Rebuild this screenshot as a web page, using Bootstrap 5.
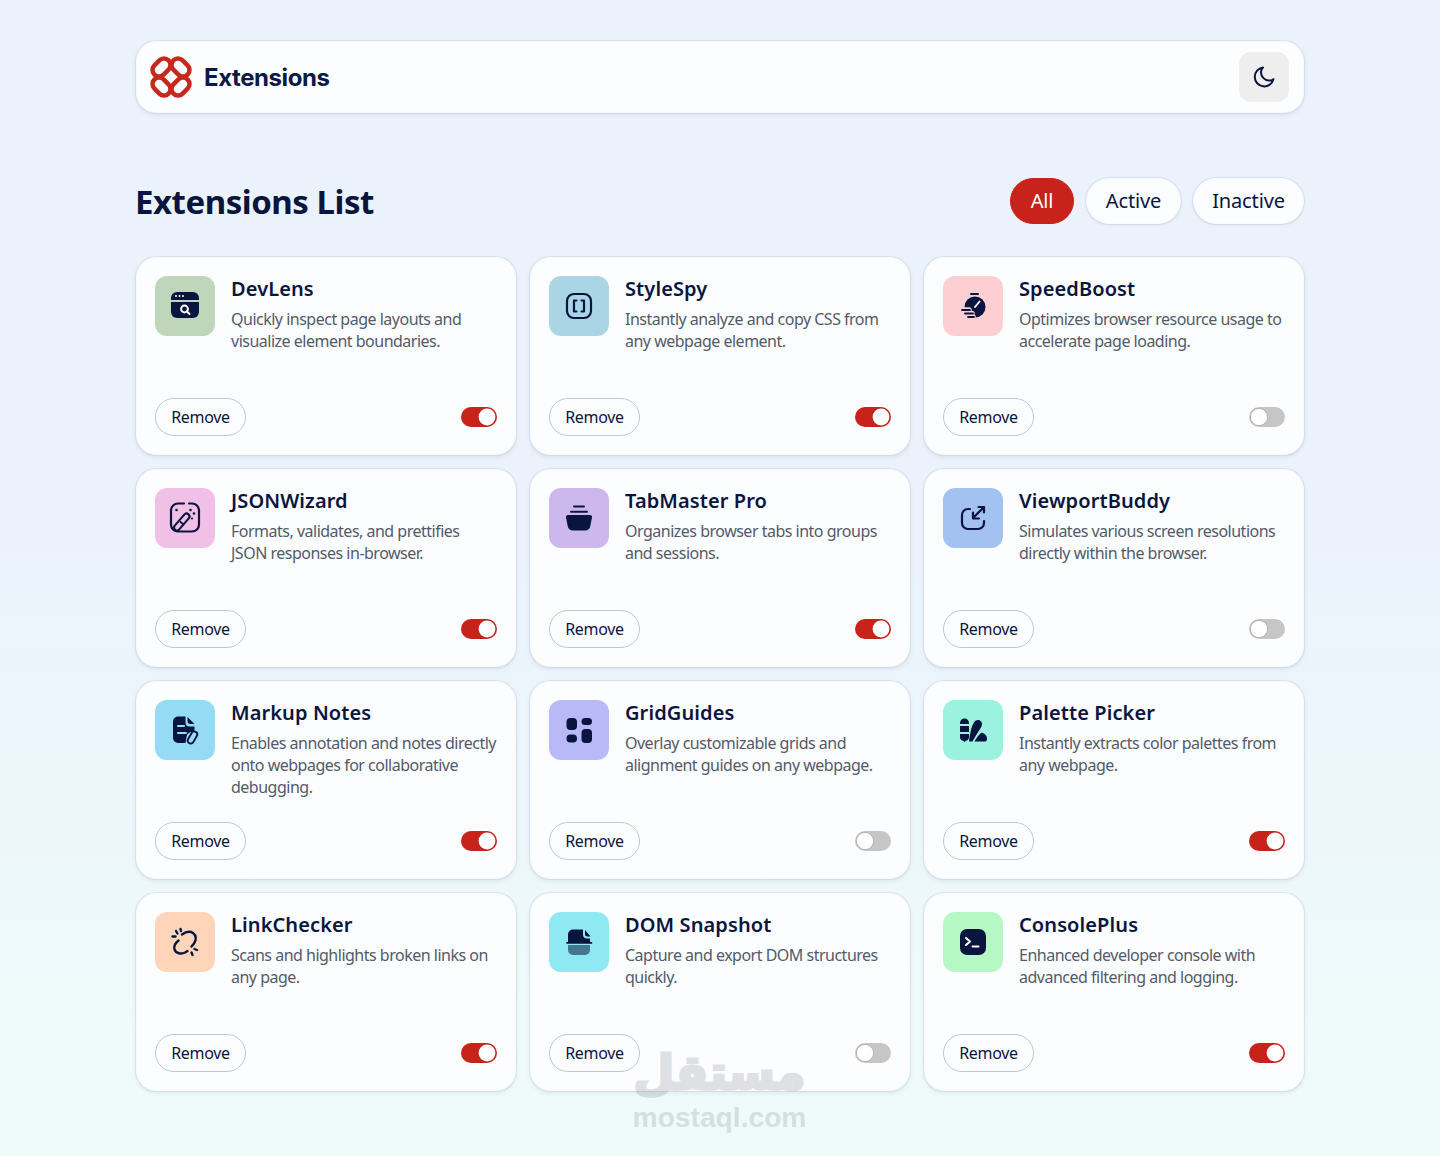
<!DOCTYPE html>
<html lang="en">
<head>
<meta charset="utf-8">
<title>Extensions</title>
<link href="https://cdn.jsdelivr.net/npm/bootstrap@5.3.0/dist/css/bootstrap.min.css" rel="stylesheet">
<style>
html,body{height:1156px;overflow:hidden}
body{font-family:"Noto Sans","Liberation Sans",sans-serif;color:#09153e;background:linear-gradient(180deg,#ebf2fc 0%,#ebf2fc 45%,#eefafa 88%,#eefbf9 100%);position:relative}
.shell{width:1168px;margin:0 auto;padding-top:41px}
.topbar{height:72px;background:#fcfdff;border:1px solid #f8f9fc;border-radius:20px;box-shadow:0 0 0 1px rgba(190,200,218,.35),0 2px 4px rgba(50,70,110,.1);padding:0 14px 0 13px}
.brand-name{font-family:Inter,"Noto Sans",sans-serif;font-weight:700;font-size:24px;letter-spacing:-.42px;color:#0b1a45;margin-left:12px;padding-top:2px}
.theme-btn{width:50px;height:50px;background:#eeeeee;border-radius:12px;border:0;padding:0}
.list-head{margin-top:65px;height:46px}
.list-title{font-size:33px;font-weight:700;letter-spacing:-.47px;margin:1px 0 0 -1px;color:#09153e}
.pill-row{column-gap:12px}
.filter-pill{height:46px;padding:0;font-size:20px;letter-spacing:-.15px;background:#fcfdff;border:1px solid #f8f9fc;box-shadow:0 0 0 1px rgba(190,200,218,.35),0 1px 3px rgba(50,70,110,.1);color:#09153e;line-height:44px}
.filter-pill.on{background:#c7231a;border-color:#c7231a;color:#fff;box-shadow:none}
.fp-all{width:64px}
.fp-act{width:95px}
.fp-ina{width:111px}
.tile-grid{display:grid;grid-template-columns:repeat(3,380px);grid-auto-rows:198px;column-gap:14px;row-gap:14px;margin-top:33px}
.ext-card{background:#fcfdff;border:1px solid #f8f9fc;border-radius:20px;box-shadow:0 0 0 1px rgba(190,200,218,.35),0 2px 4px rgba(50,70,110,.1);padding:18px}
.ext-icon{flex:0 0 60px;width:60px;height:60px;border-radius:12px}
.ext-name{font-size:20px;font-weight:600;line-height:27px;margin:-1px 0 6px;color:#09153e;letter-spacing:.1px}
.ext-desc{font-size:16px;line-height:22px;color:#535a68;letter-spacing:-.5px;margin:0 -1px 0 0}
.rm-btn{height:38px;width:91px;padding:0;font-size:16px;letter-spacing:-.3px;border:1px solid #c6c6c8;color:#09153e;background:transparent}
.form-switch .form-check-input.sw{width:36px;height:20px;margin:0;float:none;border:0;background-color:#c6c6c6;box-shadow:none;cursor:pointer;background-position:left center;background-image:url("data:image/svg+xml,%3csvg xmlns='http://www.w3.org/2000/svg' viewBox='-5 -5 10 10'%3e%3ccircle r='4.3' fill='%23fff' stroke='%23999' stroke-width='.3'/%3e%3c/svg%3e")}
.form-switch .form-check-input.sw:checked{background-color:#c7231a;background-position:right center;background-image:url("data:image/svg+xml,%3csvg xmlns='http://www.w3.org/2000/svg' viewBox='-5 -5 10 10'%3e%3ccircle r='4.2' fill='%23fff'/%3e%3c/svg%3e")}
.wm{position:absolute;left:632px;top:1041px;width:175px;text-align:center;color:#6e737d;opacity:.2;pointer-events:none}
.wm-ar{font-family:"DejaVu Sans",sans-serif;font-weight:700;font-size:47px;line-height:64px;height:64px;-webkit-text-stroke:3px #6e737d;white-space:nowrap}
.wm-en{font-family:"Liberation Sans",sans-serif;font-weight:700;font-size:28.200px;line-height:26px;margin-top:-1px;white-space:nowrap}
</style>
</head>
<body>
<div class="shell">
  <header class="topbar d-flex align-items-center justify-content-between">
    <div class="d-flex align-items-center">
      <svg width="42" height="42" viewBox="0 0 42 42" fill="none" stroke="#c7281e" stroke-width="4.500"><rect x="1.500" y="5" width="20" height="13" rx="6.500" transform="rotate(-45 11.500 11.500)"/><rect x="20.500" y="5" width="20" height="13" rx="6.500" transform="rotate(45 30.500 11.500)"/><rect x="1.500" y="24" width="20" height="13" rx="6.500" transform="rotate(45 11.500 30.500)"/><rect x="20.500" y="24" width="20" height="13" rx="6.500" transform="rotate(-45 30.500 30.500)"/></svg>
      <span class="brand-name">Extensions</span>
    </div>
    <button class="theme-btn d-flex align-items-center justify-content-center" aria-label="Toggle theme">
      <svg width="24" height="24" viewBox="0 0 24 24" fill="none" stroke="#09153e" stroke-width="2" stroke-linecap="round" stroke-linejoin="round"><path d="M11 2.500a9.500 9.500 0 1 0 10.500 11.600c-.9 1-2.300 1.500-4.600 1.500A8.500 8.500 0 0 1 9 7c0-1.800.7-3.400 2-4.500z"/></svg>
    </button>
  </header>

  <div class="list-head d-flex align-items-center justify-content-between">
    <h1 class="list-title">Extensions List</h1>
    <div class="d-flex pill-row">
      <button class="btn rounded-pill filter-pill fp-all on">All</button>
      <button class="btn rounded-pill filter-pill fp-act">Active</button>
      <button class="btn rounded-pill filter-pill fp-ina">Inactive</button>
    </div>
  </div>

  <main class="tile-grid">
    <article class="ext-card d-flex flex-column justify-content-between">
      <div class="d-flex gap-3"><div class="ext-icon d-flex align-items-center justify-content-center" style="background:#c0d6bb">
        <svg width="32" height="32" viewBox="0 0 32 32" fill="#09153e"><path d="M2 8a6 6 0 0 1 6-6h16a6 6 0 0 1 6 6v2H2z"/><path d="M2 12h28v10a6 6 0 0 1-6 6H8a6 6 0 0 1-6-6z"/><g fill="#fff"><circle cx="7" cy="6" r="1"/><circle cx="10.500" cy="6" r="1"/><circle cx="14" cy="6" r="1"/></g><circle cx="15.500" cy="19" r="3.400" fill="none" stroke="#fff" stroke-width="2"/><path d="M18 21.500l2.500 2.500" stroke="#fff" stroke-width="2" stroke-linecap="round"/></svg>
      </div><div><h2 class="ext-name">DevLens</h2><p class="ext-desc">Quickly inspect page layouts and visualize element boundaries.</p></div></div>
      <div class="d-flex align-items-center justify-content-between"><button class="btn rounded-pill rm-btn">Remove</button><div class="form-check form-switch m-0 p-0 d-flex align-items-center"><input class="form-check-input sw" type="checkbox" role="switch" checked></div></div>
    </article>

    <article class="ext-card d-flex flex-column justify-content-between">
      <div class="d-flex gap-3"><div class="ext-icon d-flex align-items-center justify-content-center" style="background:#a9d5e5">
        <svg width="32" height="32" viewBox="0 0 32 32" fill="none" stroke="#09153e" stroke-width="2.200" stroke-linecap="round" stroke-linejoin="round"><rect x="4" y="4" width="24" height="24" rx="7"/><path d="M13.500 10.500h-2.500v11h2.500M18.500 10.500h2.500v11h-2.500"/></svg>
      </div><div><h2 class="ext-name">StyleSpy</h2><p class="ext-desc">Instantly analyze and copy CSS from any webpage element.</p></div></div>
      <div class="d-flex align-items-center justify-content-between"><button class="btn rounded-pill rm-btn">Remove</button><div class="form-check form-switch m-0 p-0 d-flex align-items-center"><input class="form-check-input sw" type="checkbox" role="switch" checked></div></div>
    </article>

    <article class="ext-card d-flex flex-column justify-content-between">
      <div class="d-flex gap-3"><div class="ext-icon d-flex align-items-center justify-content-center" style="background:#fecfd2">
        <svg width="32" height="32" viewBox="0 0 32 32"><circle cx="18" cy="17" r="10.500" fill="#09153e"/><path d="M14 4h7" stroke="#09153e" stroke-width="2" stroke-linecap="round"/><g stroke="#fecfd2" stroke-width="5.500" stroke-linecap="round"><path d="M3 20h9M6 23.500h9M9 27h7"/></g><g stroke="#09153e" stroke-width="1.800" stroke-linecap="round"><path d="M5 20h8M8 23.500h8M11 27h6"/></g><path d="M18 17l4.500-5.500" stroke="#fff" stroke-width="1.800" stroke-linecap="round"/></svg>
      </div><div><h2 class="ext-name">SpeedBoost</h2><p class="ext-desc">Optimizes browser resource usage to accelerate page loading.</p></div></div>
      <div class="d-flex align-items-center justify-content-between"><button class="btn rounded-pill rm-btn">Remove</button><div class="form-check form-switch m-0 p-0 d-flex align-items-center"><input class="form-check-input sw" type="checkbox" role="switch"></div></div>
    </article>

    <article class="ext-card d-flex flex-column justify-content-between">
      <div class="d-flex gap-3"><div class="ext-icon d-flex align-items-center justify-content-center" style="background:#f1c0e6">
        <svg width="32" height="32" viewBox="0 0 32 32" fill="none" stroke="#09153e" stroke-width="2.200" stroke-linecap="round"><path d="M15 1.500H9a7 7 0 0 0-7 7v14a7 7 0 0 0 7 7h14a7 7 0 0 0 7-7v-14a7 7 0 0 0-7-7h-3"/><path d="M8 25.500l9.500-11" stroke-width="8"/><path d="M8 25.500l9.500-11" stroke="#f1c0e6" stroke-width="3.800"/><path d="M11.500 20l3 2.500" stroke-width="1.800"/><g fill="#09153e" stroke="none"><circle cx="7.500" cy="8" r="1.300"/><circle cx="21.500" cy="8" r="1.300"/><circle cx="25" cy="11.500" r="1.300"/><circle cx="23" cy="16.500" r="1.100"/></g></svg>
      </div><div><h2 class="ext-name">JSONWizard</h2><p class="ext-desc">Formats, validates, and prettifies JSON responses in-browser.</p></div></div>
      <div class="d-flex align-items-center justify-content-between"><button class="btn rounded-pill rm-btn">Remove</button><div class="form-check form-switch m-0 p-0 d-flex align-items-center"><input class="form-check-input sw" type="checkbox" role="switch" checked></div></div>
    </article>

    <article class="ext-card d-flex flex-column justify-content-between">
      <div class="d-flex gap-3"><div class="ext-icon d-flex align-items-center justify-content-center" style="background:#cdb8ee">
        <svg width="32" height="32" viewBox="0 0 32 32" fill="#09153e"><path d="M11 4.500h10M8 9.800h16" stroke="#09153e" stroke-width="2" stroke-linecap="round"/><path d="M5 13h22a2 2 0 0 1 2 2.500l-1.700 8.500a5.500 5.500 0 0 1-5.300 4.500h-12a5.500 5.500 0 0 1-5.300-4.500L3 15.500a2 2 0 0 1 2-2.500z"/></svg>
      </div><div><h2 class="ext-name">TabMaster Pro</h2><p class="ext-desc">Organizes browser tabs into groups and sessions.</p></div></div>
      <div class="d-flex align-items-center justify-content-between"><button class="btn rounded-pill rm-btn">Remove</button><div class="form-check form-switch m-0 p-0 d-flex align-items-center"><input class="form-check-input sw" type="checkbox" role="switch" checked></div></div>
    </article>

    <article class="ext-card d-flex flex-column justify-content-between">
      <div class="d-flex gap-3"><div class="ext-icon d-flex align-items-center justify-content-center" style="background:#a3c2f1">
        <svg width="32" height="32" viewBox="0 0 32 32" fill="none" stroke="#09153e" stroke-width="2.200" stroke-linecap="round" stroke-linejoin="round"><path d="M13 7h-2a6 6 0 0 0-6 6v8a6 6 0 0 0 6 6h10a6 6 0 0 0 6-6v-2"/><path d="M27 5L17 15M21.500 5H27v5.500M16 10.500V16.500h6"/></svg>
      </div><div><h2 class="ext-name">ViewportBuddy</h2><p class="ext-desc">Simulates various screen resolutions directly within the browser.</p></div></div>
      <div class="d-flex align-items-center justify-content-between"><button class="btn rounded-pill rm-btn">Remove</button><div class="form-check form-switch m-0 p-0 d-flex align-items-center"><input class="form-check-input sw" type="checkbox" role="switch"></div></div>
    </article>

    <article class="ext-card d-flex flex-column justify-content-between">
      <div class="d-flex gap-3"><div class="ext-icon d-flex align-items-center justify-content-center" style="background:#95dbf6">
        <svg width="32" height="32" viewBox="0 0 32 32" fill="#09153e"><path d="M9 2.500h7.500v6a4 4 0 0 0 4 4h5v5.500h-2a6 6 0 0 0-6 5l-1 6H9a5 5 0 0 1-5-5v-16.500a5 5 0 0 1 5-5z"/><path d="M18.500 3l7 7h-4a3 3 0 0 1-3-3z"/><path d="M9 12h6M9 19h8" stroke="#95dbf6" stroke-width="2" stroke-linecap="round"/><rect x="-3" y="-6.500" width="6" height="13" rx="3" transform="translate(23.500 23.500) rotate(30)" fill="none" stroke="#09153e" stroke-width="1.800"/></svg>
      </div><div><h2 class="ext-name">Markup Notes</h2><p class="ext-desc">Enables annotation and notes directly onto webpages for collaborative debugging.</p></div></div>
      <div class="d-flex align-items-center justify-content-between"><button class="btn rounded-pill rm-btn">Remove</button><div class="form-check form-switch m-0 p-0 d-flex align-items-center"><input class="form-check-input sw" type="checkbox" role="switch" checked></div></div>
    </article>

    <article class="ext-card d-flex flex-column justify-content-between">
      <div class="d-flex gap-3"><div class="ext-icon d-flex align-items-center justify-content-center" style="background:#b9b9f8">
        <svg width="32" height="32" viewBox="0 0 32 32" fill="#09153e"><rect x="3.500" y="4" width="10.500" height="12" rx="4"/><rect x="18.500" y="4" width="10.500" height="7" rx="3.500"/><rect x="3.500" y="20.500" width="10.500" height="8" rx="3.800"/><rect x="18.500" y="15" width="10.500" height="14" rx="4"/></svg>
      </div><div><h2 class="ext-name">GridGuides</h2><p class="ext-desc">Overlay customizable grids and alignment guides on any webpage.</p></div></div>
      <div class="d-flex align-items-center justify-content-between"><button class="btn rounded-pill rm-btn">Remove</button><div class="form-check form-switch m-0 p-0 d-flex align-items-center"><input class="form-check-input sw" type="checkbox" role="switch"></div></div>
    </article>

    <article class="ext-card d-flex flex-column justify-content-between">
      <div class="d-flex gap-3"><div class="ext-icon d-flex align-items-center justify-content-center" style="background:#9af2df">
        <svg width="32" height="32" viewBox="0 0 32 32" fill="#09153e"><path d="M3 9a4.500 4.500 0 0 1 9 0v1H3zM3 12h9v6H3zM3 20h9v3a4 4 0 0 1-3 3.800L7.500 28 6 26.800A4 4 0 0 1 3 23z"/><path d="M12 27.500C13 20 14 13 17 8.500C18.500 6 21 5.500 23 6.500C25.500 8 25.500 11 24 13.500C21 18 18 23 15.500 27.500Z"/><path d="M17.500 27.500c1.500-3 4-6.500 6.500-8.500 1.500-.9 6 2 6 5.500 0 1.800-.7 3-2 3z"/></svg>
      </div><div><h2 class="ext-name">Palette Picker</h2><p class="ext-desc">Instantly extracts color palettes from any webpage.</p></div></div>
      <div class="d-flex align-items-center justify-content-between"><button class="btn rounded-pill rm-btn">Remove</button><div class="form-check form-switch m-0 p-0 d-flex align-items-center"><input class="form-check-input sw" type="checkbox" role="switch" checked></div></div>
    </article>

    <article class="ext-card d-flex flex-column justify-content-between">
      <div class="d-flex gap-3"><div class="ext-icon d-flex align-items-center justify-content-center" style="background:#fed5b9">
        <svg width="32" height="32" viewBox="0 0 32 32" fill="none" stroke="#09153e" stroke-width="2.400" stroke-linecap="round"><path d="M13 8.500c3.500-2.500 8-3.500 11-1.500 3.500 2.500 3.500 7 1 10.500l-2.500 3"/><path d="M9.500 14.500c-2.500 2-5 5.500-4 9 1.500 4 6.500 5 10.500 3l2.500-1.500"/><path d="M7 5l1.500 2.500M11.500 3l.5 2M3.500 10.500h3M28 24l-2.500-1M23.500 29l-1-2.500"/></svg>
      </div><div><h2 class="ext-name">LinkChecker</h2><p class="ext-desc">Scans and highlights broken links on any page.</p></div></div>
      <div class="d-flex align-items-center justify-content-between"><button class="btn rounded-pill rm-btn">Remove</button><div class="form-check form-switch m-0 p-0 d-flex align-items-center"><input class="form-check-input sw" type="checkbox" role="switch" checked></div></div>
    </article>

    <article class="ext-card d-flex flex-column justify-content-between">
      <div class="d-flex gap-3"><div class="ext-icon d-flex align-items-center justify-content-center" style="background:#8ee9f3">
        <svg width="32" height="32" viewBox="0 0 32 32"><path d="M10 3.500h10v5a4 4 0 0 0 4 4h3v3.500H5V8.500a5 5 0 0 1 5-5z" fill="#09153e"/><path d="M22 4l5.500 6.500h-3a2.500 2.500 0 0 1-2.500-2.500z" fill="#09153e"/><path d="M4 16.800h24.500" stroke="#09153e" stroke-width="1.800" stroke-linecap="round"/><path d="M5 19h22v5a5 5 0 0 1-5 5H10a5 5 0 0 1-5-5z" fill="#09153e" fill-opacity=".55"/></svg>
      </div><div><h2 class="ext-name">DOM Snapshot</h2><p class="ext-desc">Capture and export DOM structures quickly.</p></div></div>
      <div class="d-flex align-items-center justify-content-between"><button class="btn rounded-pill rm-btn">Remove</button><div class="form-check form-switch m-0 p-0 d-flex align-items-center"><input class="form-check-input sw" type="checkbox" role="switch"></div></div>
    </article>

    <article class="ext-card d-flex flex-column justify-content-between">
      <div class="d-flex gap-3"><div class="ext-icon d-flex align-items-center justify-content-center" style="background:#b6f8c3">
        <svg width="32" height="32" viewBox="0 0 32 32"><rect x="3" y="3" width="26" height="26" rx="7" fill="#09153e"/><path d="M9 12l4 3.500-4 3.500M15.500 20.500h6" fill="none" stroke="#fff" stroke-width="2" stroke-linecap="round" stroke-linejoin="round"/></svg>
      </div><div><h2 class="ext-name">ConsolePlus</h2><p class="ext-desc">Enhanced developer console with advanced filtering and logging.</p></div></div>
      <div class="d-flex align-items-center justify-content-between"><button class="btn rounded-pill rm-btn">Remove</button><div class="form-check form-switch m-0 p-0 d-flex align-items-center"><input class="form-check-input sw" type="checkbox" role="switch" checked></div></div>
    </article>
  </main>
</div>
<div class="wm"><div class="wm-ar" dir="rtl">مستقل</div><div class="wm-en">mostaql.com</div></div>
<script src="https://cdn.jsdelivr.net/npm/bootstrap@5.3.0/dist/js/bootstrap.bundle.min.js"></script>
</body>
</html>
